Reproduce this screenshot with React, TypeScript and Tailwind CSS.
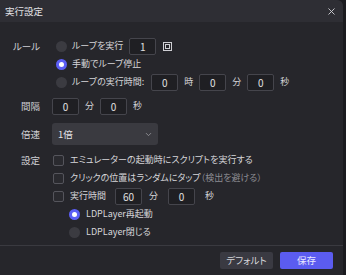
import { X, ChevronDown } from "lucide-react";

const font = {
  fontFamily: '"Noto Sans CJK JP", "Noto Sans", sans-serif',
  fontFeatureSettings: '"palt"',
};

function Box({ value }: { value: string }) {
  return (
    <div className="w-[27px] h-[17px] border border-[#45454c] bg-[#1f1f23] rounded-[2px] flex items-center justify-center text-[10px] text-[#e0e0e0]">
      {value}
    </div>
  );
}

function Radio({ checked = false }: { checked?: boolean }) {
  return checked ? (
    <span className="w-[11px] h-[11px] rounded-full bg-[#5b5ef5] flex items-center justify-center shrink-0">
      <span className="w-[5px] h-[5px] rounded-full bg-white" />
    </span>
  ) : (
    <span className="w-[11px] h-[11px] rounded-full bg-[#3b3b41] shrink-0" />
  );
}

function Check() {
  return <span className="w-[11px] h-[11px] rounded-[2px] border border-[#55555c] bg-[#2a2a2f] shrink-0" />;
}

function Label({ children }: { children: string }) {
  return <div className="w-[41px] pr-[1px] text-right text-[9.5px] text-[#cfcfd4]">{children}</div>;
}

export default function App() {
  return (
    <div className="w-[346px] h-[275px] bg-[#1b1b1f] overflow-hidden" style={font}>
      <div className="w-[343px] h-[275px] bg-[#26262b] rounded-tr-[6px] flex flex-col text-[#d6d6da] text-[9px]">
        {/* title */}
        <div className="h-[22px] bg-[#2e2e34] flex items-center justify-between pl-[5px] pr-[6px] rounded-tr-[6px]">
          <span className="text-[9.5px] text-[#e2e2e6]">実行設定</span>
          <X className="w-[11px] h-[11px] text-[#cfcfd4]" strokeWidth={2} />
        </div>

        <div className="flex-1 pt-[15px]">
          {/* ルール */}
          <div className="flex">
            <div className="h-[18px] flex items-center w-[41px]">
              <Label>ルール</Label>
            </div>
            <div className="flex flex-col pl-[15px]">
              <div className="h-[18px] flex items-center gap-[5px]">
                <Radio />
                <span>ループを実行</span>
                <div className="ml-[1px]">
                  <Box value="1" />
                </div>
                <span className="ml-[2px] w-[9px] h-[9px] border border-[#cfcfd4] flex items-center justify-center">
                  <span className="w-[5px] h-[5px] border border-[#cfcfd4]" />
                </span>
              </div>
              <div className="h-[18px] flex items-center gap-[5px]">
                <Radio checked />
                <span>手動でループ停止</span>
              </div>
              <div className="h-[18px] flex items-center gap-[5px]">
                <Radio />
                <span>ループの実行時間:</span>
                <div className="ml-[2px] flex items-center gap-[6px]">
                  <Box value="0" />
                  <span>時</span>
                  <Box value="0" />
                  <span>分</span>
                  <Box value="0" />
                  <span>秒</span>
                </div>
              </div>
            </div>
          </div>

          {/* 間隔 */}
          <div className="flex items-center h-[18px] mt-[6px]">
            <Label>間隔</Label>
            <div className="pl-[11px] flex items-center gap-[6px]">
              <Box value="0" />
              <span>分</span>
              <Box value="0" />
              <span>秒</span>
            </div>
          </div>

          {/* 倍速 */}
          <div className="flex items-center h-[22px] mt-[8px]">
            <Label>倍速</Label>
            <div className="ml-[11px] w-[106px] h-[22px] bg-[#3a3a40] rounded-[3px] flex items-center justify-between pl-[6px] pr-[5px]">
              <span className="text-[#e2e2e6] text-[9.5px]">1倍</span>
              <ChevronDown className="w-[9px] h-[9px] text-[#a0a0a6]" />
            </div>
          </div>

          {/* 設定 */}
          <div className="flex mt-[6px]">
            <div className="h-[18px] flex items-center w-[41px]">
              <Label>設定</Label>
            </div>
            <div className="flex flex-col pl-[12px]">
              <div className="h-[18px] flex items-center gap-[6px]">
                <Check />
                <span>エミュレーターの起動時にスクリプトを実行する</span>
              </div>
              <div className="h-[18px] flex items-center gap-[6px]">
                <Check />
                <span>
                  クリックの位置はランダムにタップ<span className="text-[#8c8c92]">（検出を避ける）</span>
                </span>
              </div>
              <div className="h-[18px] flex items-center gap-[6px]">
                <Check />
                <span>実行時間</span>
                <div className="ml-[3px] flex items-center">
                  <Box value="60" />
                  <span className="ml-[7px]">分</span>
                  <span className="ml-[10px]">
                    <Box value="0" />
                  </span>
                  <span className="ml-[10px]">秒</span>
                </div>
              </div>
              <div className="h-[18px] flex items-center gap-[6px] pl-[16px]">
                <Radio checked />
                <span>LDPLayer再起動</span>
              </div>
              <div className="h-[18px] flex items-center gap-[6px] pl-[16px]">
                <Radio />
                <span>LDPLayer閉じる</span>
              </div>
            </div>
          </div>
        </div>

        {/* footer */}
        <div className="h-[30px] border-t border-[#3a3a40] flex items-center justify-end gap-[7px] pr-[10px]">
          <button className="w-[53px] h-[17px] bg-[#3a3a42] rounded-[2px] text-[9.5px] text-[#d6d6da]">デフォルト</button>
          <button className="w-[53px] h-[17px] bg-[#5b5cf0] rounded-[2px] text-[9.5px] text-[#e8e8ff]">保存</button>
        </div>
      </div>
    </div>
  );
}
